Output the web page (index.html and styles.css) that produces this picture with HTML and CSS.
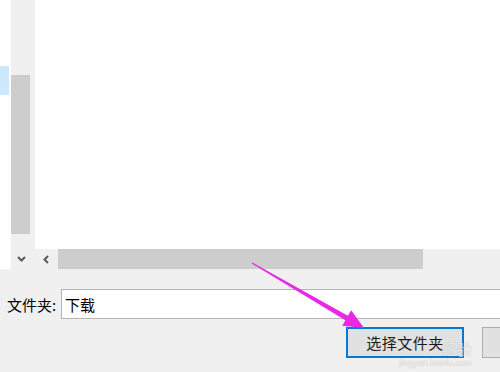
FILE: index.html
```html
<!DOCTYPE html>
<html lang="zh-CN">
<head>
  <meta charset="UTF-8" />
  <title>选择文件夹</title>
  <link rel="stylesheet" href="styles.css">
</head>
<body>

  <div class="browser">
    <div class="nav">
      <div class="nav-item selected"></div>
    </div>

    <div class="vscroll">
      <div class="vtrack">
        <div class="vthumb"></div>
      </div>
      <div class="scroll-btn">
        <svg width="9" height="6" viewBox="0 0 9 6"><path d="M1 1 L4.5 4.5 L8 1" fill="none" stroke="#5a5a5a" stroke-width="2"/></svg>
      </div>
    </div>

    <div class="pane">
      <div class="list"></div>
      <div class="hscroll">
        <div class="scroll-btn left">
          <svg width="6" height="9" viewBox="0 0 6 9"><path d="M5 1 L1.5 4.5 L5 8" fill="none" stroke="#5a5a5a" stroke-width="2"/></svg>
        </div>
        <div class="hthumb"></div>
      </div>
    </div>
  </div>

  <div class="folder-row">
    <label for="folder">文件夹:</label>
    <input type="text" id="folder" value="下载" />
  </div>

  <div class="actions">
    <button class="btn primary">选择文件夹</button>
    <button class="btn"></button>
  </div>

  <div class="watermark">
    <span class="wm-title">经验</span>
    <span class="wm-url">jingyan.baidu.com</span>
  </div>

  <svg class="arrow" width="500" height="372" viewBox="0 0 500 372">
    <polygon fill="#e928e6" points="252.3,262.6 347.9,315.8 351.2,310.2 364,328 342.2,325.8 345.4,320.2 251.7,263.4"/>
  </svg>

</body>
</html>
```

FILE: styles.css
```css
body {
  margin: 0;
  width: 500px;
  height: 372px;
  overflow: hidden;
  background: #f0f0f0;
  font-family: "Noto Sans CJK SC", "Noto Sans", sans-serif;
  color: #000;
  position: relative;
}
.browser {
  display: flex;
  height: 269px;
}
.nav {
  width: 11px;
  background: #fff;
  padding-top: 66px;
  box-sizing: border-box;
}
.nav-item.selected {
  height: 29px;
  width: 9px;
  background: #cce8ff;
}
.vscroll {
  width: 23px;
  display: flex;
  flex-direction: column;
  background: #f0f0f0;
}
.vtrack {
  flex: 1;
  padding-top: 75px;
}
.vthumb {
  width: 19px;
  height: 159px;
  background: #cdcdcd;
}
.scroll-btn {
  height: 20px;
  width: 20px;
  display: flex;
  align-items: center;
  justify-content: center;
}
.pane {
  flex: 1;
  display: flex;
  flex-direction: column;
  margin-left: 1px;
}
.list {
  flex: 1;
  background: #fff;
}
.hscroll {
  height: 20px;
  display: flex;
  align-items: stretch;
  background: #f0f0f0;
}
.scroll-btn.left {
  width: 22px;
  margin-right: 1px;
}
.hthumb {
  width: 365px;
  background: #cdcdcd;
}
.folder-row {
  display: flex;
  align-items: center;
  margin-top: 20px;
  padding-left: 7px;
}
.folder-row label {
  font-size: 15px;
  width: 54px;
}
.folder-row input {
  flex: 1;
  min-width: 0;
  height: 30px;
  box-sizing: border-box;
  border: 1px solid #b4b4b4;
  border-right: none;
  padding: 0 3px;
  font-family: inherit;
  font-size: 15px;
  outline: none;
}
.actions {
  display: flex;
  margin-top: 8px;
  padding-left: 346px;
  gap: 18px;
  overflow: hidden;
}
.btn {
  height: 31px;
  width: 118px;
  box-sizing: border-box;
  background: #e1e1e1;
  border: 1px solid #adadad;
  font-family: inherit;
  font-size: 15px;
  padding: 0;
  flex-shrink: 0;
}
.btn.primary {
  border: 2px solid #0078d7;
  color: #1a1a1a;
  letter-spacing: 0.5px;
}
.btn + .btn {
  width: 18px;
  border-right: none;
}
.watermark {
  position: absolute;
  left: 386px;
  top: 340px;
  display: flex;
  flex-direction: column;
  align-items: flex-end;
  width: 86px;
  color: rgba(255, 255, 255, 0.7);
  text-shadow: 0 0 1px rgba(120, 120, 120, 0.5);
  pointer-events: none;
}
.wm-title {
  font-size: 15px;
  line-height: 18px;
}
.wm-url {
  font-family: "Liberation Sans", sans-serif;
  font-size: 9px;
  line-height: 10px;
}
.arrow {
  position: absolute;
  left: 0;
  top: 0;
  pointer-events: none;
}
```
